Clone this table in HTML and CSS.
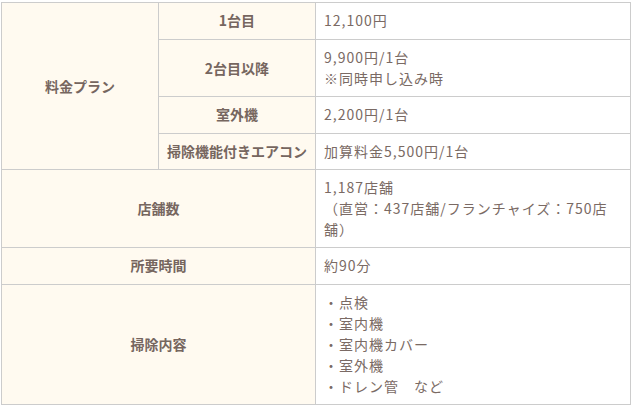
FILE: index.html
```html
<!DOCTYPE html>
<html lang="ja">
<head>
<meta charset="utf-8">
<link rel="stylesheet" href="styles.css">
</head>
<body>
<table class="spec">
  <colgroup>
    <col class="c1"><col class="c2"><col class="c3">
  </colgroup>
  <tbody>
    <tr class="single">
      <th rowspan="4" class="plain">料金プラン</th>
      <th>1台目</th>
      <td>12,100円</td>
    </tr>
    <tr>
      <th>2台目以降</th>
      <td>9,900円/1台<br>※同時申し込み時</td>
    </tr>
    <tr class="single">
      <th>室外機</th>
      <td>2,200円/1台</td>
    </tr>
    <tr>
      <th>掃除機能付きエアコン</th>
      <td>加算料金5,500円/1台</td>
    </tr>
    <tr>
      <th colspan="2">店舗数</th>
      <td>1,187店舗<br>（直営：437店舗/フランチャイズ：750店舗）</td>
    </tr>
    <tr class="single">
      <th colspan="2">所要時間</th>
      <td>約90分</td>
    </tr>
    <tr>
      <th colspan="2">掃除内容</th>
      <td>・点検<br>・室内機<br>・室内機カバー<br>・室外機<br>・ドレン管　など</td>
    </tr>
  </tbody>
</table>
</body>
</html>
```
FILE: styles.css
```css
html, body {
  margin: 0;
  padding: 0;
  background: #ffffff;
}
body {
  padding: 2px 0 0 1px;
  font-family: "Noto Sans CJK JP", "Noto Sans", sans-serif;
  font-size: 14px;
  line-height: 21px;
  color: #76665f;
}
.spec {
  width: 629px;
  border-collapse: collapse;
  table-layout: fixed;
}
.c1 { width: 157px; }
.c2 { width: 157px; }
.c3 { width: 315px; }
.spec th,
.spec td {
  border: 1px solid #cccccc;
  padding: 7px 8px 7px 8px;
  vertical-align: middle;
}
.spec .single th,
.spec .single td {
  padding-bottom: 8px;
}
.spec .single th.plain {
  padding-bottom: 7px;
}
.spec th {
  background: #fffaf0;
  font-weight: bold;
  text-align: center;
  color: #76665f;
}
.spec td {
  background: #ffffff;
  text-align: left;
  letter-spacing: 1px;
  font-weight: normal;
  color: #7a6a64;
}
```
